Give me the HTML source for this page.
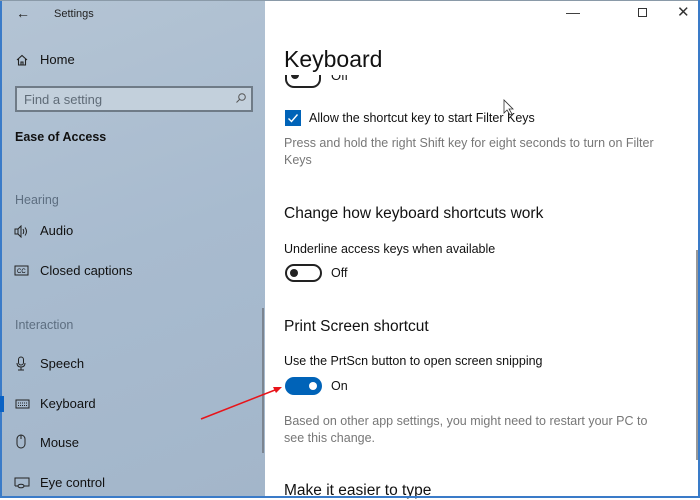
<!DOCTYPE html>
<html><head><style>
*{margin:0;padding:0;box-sizing:border-box}
body{width:700px;height:498px;overflow:hidden;font-family:"Liberation Sans",sans-serif;position:relative;background:#fff}
.side{position:absolute;left:0;top:0;width:265px;height:498px;background:linear-gradient(160deg,#b4c4d4 0%,#a8bbcf 50%,#a3b6ca 100%);border-left:2px solid #3a7bc8}
.t{position:absolute;white-space:nowrap}
.main{position:absolute;left:265px;top:0;width:435px;height:498px;background:#fff}
.ic{position:absolute}
</style></head><body>
<div class="side">
<div class="t" style="left:14px;top:5px;font-size:14px;color:#222">&#8592;</div>
<div class="t" style="left:52px;top:8px;font-size:11px;color:#222">Settings</div>
<svg class="ic" style="left:13px;top:53px" width="14" height="14" viewBox="0 0 14 14"><path d="M2 7L7 2.5 12 7M3.5 6v6h7V6M6 12V9h2v3" fill="none" stroke="#222" stroke-width="1.1"/></svg>
<div class="t" style="left:38px;top:52px;font-size:13px;color:#111">Home</div>
<div style="position:absolute;left:13px;top:86px;width:238px;height:26px;border:2px solid #6f7b87;background:#c3d0dc"></div>
<div class="t" style="left:22px;top:92px;font-size:13px;color:#5f6b77">Find a setting</div>
<svg class="ic" style="left:233px;top:92px" width="12" height="12" viewBox="0 0 12 12"><circle cx="7" cy="5" r="3.3" fill="none" stroke="#555" stroke-width="1"/><path d="M4.6 7.4L1.5 10.5" stroke="#555"/></svg>
<div class="t" style="left:13px;top:130px;font-size:12.5px;font-weight:bold;color:#111">Ease of Access</div>
<div class="t" style="left:13px;top:193px;font-size:12.5px;color:#5d6e80">Hearing</div>
<svg class="ic" style="left:12px;top:225px" width="16" height="13" viewBox="0 0 16 13"><rect x="1" y="4" width="3" height="5" fill="none" stroke="#222"/><path d="M4 4l3-3v11l-3-3M9 4q1.5 2.5 0 5M11 2.5q3 4 0 8" fill="none" stroke="#222"/></svg>
<div class="t" style="left:38px;top:223px;font-size:13px;color:#111">Audio</div>
<svg class="ic" style="left:12px;top:265px" width="15" height="11" viewBox="0 0 15 11"><rect x="1" y="1" width="13" height="9" fill="none" stroke="#222"/><text x="3" y="8" font-size="6" font-family="Liberation Sans">CC</text></svg>
<div class="t" style="left:38px;top:263px;font-size:13px;color:#111">Closed captions</div>
<div class="t" style="left:13px;top:318px;font-size:12.5px;color:#5d6e80">Interaction</div>
<svg class="ic" style="left:14px;top:356px" width="10" height="15" viewBox="0 0 10 15"><rect x="2.5" y="1" width="5" height="8" rx="2.5" fill="none" stroke="#222"/><path d="M1 7q0 4 4 4t4-4M5 11v3M2 14h6" fill="none" stroke="#222"/></svg>
<div class="t" style="left:38px;top:356px;font-size:13px;color:#111">Speech</div>
<div style="position:absolute;left:-2px;top:396px;width:4px;height:16px;background:#0a62c4"></div>
<svg class="ic" style="left:13px;top:399px" width="15" height="10" viewBox="0 0 15 10"><rect x="1" y="1" width="13" height="8" fill="none" stroke="#222"/><path d="M3 4h9M3 6.5h9" stroke="#222" stroke-dasharray="1 1"/></svg>
<div class="t" style="left:38px;top:396px;font-size:13px;color:#111">Keyboard</div>
<svg class="ic" style="left:14px;top:434px" width="10" height="16" viewBox="0 0 10 16"><rect x="1" y="1" width="8" height="13" rx="4" fill="none" stroke="#222"/><path d="M5 1v4" stroke="#222"/></svg>
<div class="t" style="left:38px;top:435px;font-size:13px;color:#111">Mouse</div>
<svg class="ic" style="left:12px;top:477px" width="16" height="12" viewBox="0 0 16 12"><path d="M1 9V1h14v8H10M1 9h3" fill="none" stroke="#222"/><ellipse cx="7" cy="9" rx="3" ry="1.8" fill="none" stroke="#222"/></svg>
<div class="t" style="left:38px;top:475px;font-size:13px;color:#111">Eye control</div>
<div style="position:absolute;left:260px;top:308px;width:2px;height:145px;background:#7c8590"></div>
</div>
<div class="main">
<div style="position:absolute;left:20px;top:70px;width:36px;height:18px;border:2px solid #222;border-top:none;border-radius:0 0 9px 9px"></div>
<div style="position:absolute;left:26px;top:73px;width:8px;height:6px;background:#222;border-radius:0 0 4px 4px"></div>
<div class="t" style="left:66px;top:68px;font-size:13px;color:#111">Off</div>
<div style="position:absolute;left:0;top:0;width:435px;height:75px;background:#fff"></div>
<div class="t" style="left:301px;top:4px;font-size:14px;color:#333">&#8212;</div>
<div style="position:absolute;left:373px;top:8px;width:9px;height:9px;border:1px solid #333"></div>
<div class="t" style="left:412px;top:3px;font-size:15px;color:#333">&#x2715;</div>
<div class="t" style="left:19px;top:46px;font-size:23px;color:#111">Keyboard</div>
<div style="position:absolute;left:20px;top:110px;width:16px;height:16px;background:#0063b8"></div>
<svg class="ic" style="left:20px;top:110px" width="16" height="16"><path d="M3.5 8.5l3 3 6-7" fill="none" stroke="#fff" stroke-width="1.4"/></svg>
<div class="t" style="left:44px;top:111px;font-size:12.5px;color:#111">Allow the shortcut key to start Filter Keys</div>
<svg class="ic" style="left:238px;top:99px" width="12" height="18"><path d="M1 1v13l3-3 3 5 2-1-3-5h4z" fill="#fff" stroke="#333" stroke-width="0.8"/></svg>
<div class="t" style="left:19px;top:135px;font-size:12.5px;color:#777;line-height:17px">Press and hold the right Shift key for eight seconds to turn on Filter<br>Keys</div>
<div class="t" style="left:19px;top:205px;font-size:15.5px;color:#111">Change how keyboard shortcuts work</div>
<div class="t" style="left:19px;top:242px;font-size:12.5px;color:#111">Underline access keys when available</div>
<div style="position:absolute;left:20px;top:264px;width:37px;height:18px;border:2px solid #222;border-radius:9px"></div>
<div style="position:absolute;left:25px;top:269px;width:8px;height:8px;background:#222;border-radius:50%"></div>
<div class="t" style="left:66px;top:266px;font-size:12.5px;color:#111">Off</div>
<div class="t" style="left:19px;top:318px;font-size:15.5px;color:#111">Print Screen shortcut</div>
<div class="t" style="left:19px;top:354px;font-size:12.5px;color:#111">Use the PrtScn button to open screen snipping</div>
<div style="position:absolute;left:20px;top:377px;width:37px;height:18px;background:#0063b8;border-radius:9px"></div>
<div style="position:absolute;left:44px;top:382px;width:8px;height:8px;background:#fff;border-radius:50%"></div>
<div class="t" style="left:66px;top:379px;font-size:12.5px;color:#111">On</div>
<div class="t" style="left:19px;top:413px;font-size:12.5px;color:#777;line-height:17px">Based on other app settings, you might need to restart your PC to<br>see this change.</div>
<div class="t" style="left:19px;top:482px;font-size:15.5px;color:#111">Make it easier to type</div>
<div style="position:absolute;left:431px;top:250px;width:2px;height:210px;background:#999"></div>
</div>
<svg style="position:absolute;left:0;top:0" width="700" height="498"><path d="M201 419L275 390" stroke="#e8141a" stroke-width="1.5"/><path d="M282 387l-9 0 3 6z" fill="#e8141a"/></svg>
<div style="position:absolute;left:0;top:0;width:700px;height:1px;background:#8a9aa8"></div>
<div style="position:absolute;left:0;top:496px;width:700px;height:2px;background:#3a7bc8"></div>
<div style="position:absolute;left:698px;top:0;width:2px;height:498px;background:#3a7bc8"></div>
</body></html>
